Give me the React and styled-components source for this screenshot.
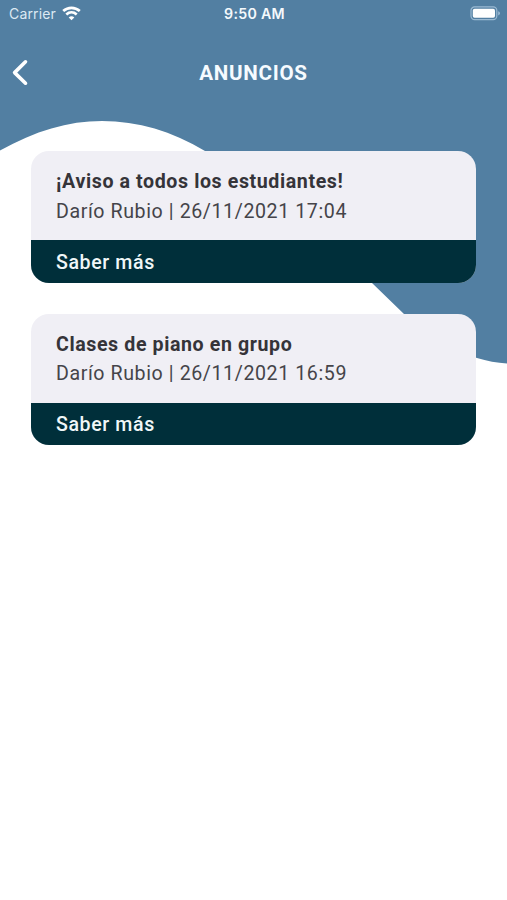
import React from "react";
import styled, { createGlobalStyle } from "styled-components";

const GlobalStyle = createGlobalStyle`
  *, *::before, *::after { box-sizing: border-box; }
  body { margin: 0; background: #fff; }
`;

const Screen = styled.div`
  position: relative;
  width: 507px;
  height: 900px;
  overflow: hidden;
  background: #fff;
  font-family: Roboto, sans-serif;
`;

const Backdrop = styled.svg`
  position: absolute;
  inset: 0;
  display: block;
`;

const Content = styled.div`
  position: relative;
  display: flex;
  flex-direction: column;
`;

const StatusBar = styled.div`
  display: grid;
  grid-template-columns: 1fr auto 1fr;
  align-items: center;
  height: 27px;
  padding: 0 7px 0 9px;
  color: #f4f9fc;
  font-family: Inter, sans-serif;
  font-size: 14px;
`;

const Carrier = styled.div`
  display: flex;
  align-items: center;
  gap: 6px;
  color: #dce9f3;
  letter-spacing: 0.15px;
`;

const Clock = styled.div`
  font-weight: 600;
  font-size: 14.2px;
  letter-spacing: 0.3px;
`;

const Battery = styled.svg`
  justify-self: end;
`;

const Header = styled.header`
  display: grid;
  grid-template-columns: 40px 1fr 40px;
  align-items: center;
  height: 92px;
`;

const BackButton = styled.button`
  display: flex;
  width: 40px;
  height: 44px;
  padding: 0 0 0 11px;
  align-items: center;
  border: 0;
  background: none;
  cursor: pointer;
`;

const Title = styled.h1`
  margin: 0;
  color: #f6fbff;
  font-size: 20.6px;
  line-height: 24px;
  font-weight: 700;
  letter-spacing: 0.7px;
  text-align: center;
`;

const List = styled.main`
  display: flex;
  flex-direction: column;
  gap: 30.8px;
  padding: 32.4px 30.6px 0 31.4px;
`;

const Card = styled.article`
  overflow: hidden;
  border-radius: 18px;
  background: #f0eff5;
`;

const CardBody = styled.div`
  height: 88.8px;
  padding: 15.8px 24.6px 0;
  color: #353439;
`;

const CardTitle = styled.h2`
  margin: 0;
  font-size: 19.6px;
  line-height: 29.5px;
  font-weight: 700;
  letter-spacing: 0.6px;
`;

const CardMeta = styled.p`
  margin: 0;
  color: #454449;
  font-size: 19.6px;
  line-height: 29.5px;
  letter-spacing: 0.59px;
`;

const CardAction = styled.button`
  display: flex;
  align-items: center;
  width: 100%;
  height: 42.8px;
  padding: 1px 24.6px 0;
  border: 0;
  background: #002f3a;
  color: #f0f7f8;
  font-family: inherit;
  font-size: 19.6px;
  font-weight: 500;
  letter-spacing: 0.6px;
  cursor: pointer;
`;

const announcements = [
  { title: "¡Aviso a todos los estudiantes!", author: "Darío Rubio", date: "26/11/2021 17:04" },
  { title: "Clases de piano en grupo", author: "Darío Rubio", date: "26/11/2021 16:59" },
];

function WifiIcon() {
  return (
    <svg width="19" height="15" viewBox="0 0 19 15" fill="none" stroke="#fff" strokeWidth="2.7">
      <path d="M1.2 5.1C6 .7 13 .7 17.8 5.1" />
      <path d="M4.3 8.5C7.4 5.7 11.6 5.7 14.7 8.5" />
      <path d="M9.5 14.2 6.7 11.4C8.3 9.9 10.7 9.9 12.3 11.4Z" fill="#fff" stroke="none" />
    </svg>
  );
}

function BatteryIcon() {
  return (
    <Battery width="30" height="15" viewBox="0 0 30 15">
      <rect x="1" y="0.9" width="25.8" height="12.8" rx="3.6" fill="none" stroke="#9bbad3" strokeWidth="1.2" />
      <rect x="2.8" y="2.8" width="22.2" height="9" rx="1.8" fill="#fff" />
      <path d="M28.2 5.2Q30 5.7 30 7.3T28.2 9.4Z" fill="#9bbad3" />
    </Battery>
  );
}

export default function App() {
  return (
    <>
      <GlobalStyle />
      <Screen>
        <Backdrop width="507" height="900" viewBox="0 0 507 900" aria-hidden="true">
          <path
            fill="#527fa2"
            d="M0 0H507V363.5C497 363 487 361 477 358C450 351 425 333 404 314L372 283C320 230 270 187 205 151C172 131 138 121 102 121C68 121 35 131 0 150.5Z"
          />
        </Backdrop>
        <Content>
          <StatusBar>
            <Carrier>
              <span>Carrier</span>
              <WifiIcon />
            </Carrier>
            <Clock>9:50 AM</Clock>
            <BatteryIcon />
          </StatusBar>
          <Header>
            <BackButton aria-label="Volver">
              <svg width="18" height="28" viewBox="0 0 18 28" fill="none" stroke="#fff" strokeWidth="3.6" strokeLinecap="round" strokeLinejoin="round">
                <path d="M14.5 2.8 3.6 13.6 14.5 24.2" />
              </svg>
            </BackButton>
            <Title>ANUNCIOS</Title>
          </Header>
          <List>
            {announcements.map((item) => (
              <Card key={item.title}>
                <CardBody>
                  <CardTitle>{item.title}</CardTitle>
                  <CardMeta>{item.author} | {item.date}</CardMeta>
                </CardBody>
                <CardAction>Saber más</CardAction>
              </Card>
            ))}
          </List>
        </Content>
      </Screen>
    </>
  );
}
